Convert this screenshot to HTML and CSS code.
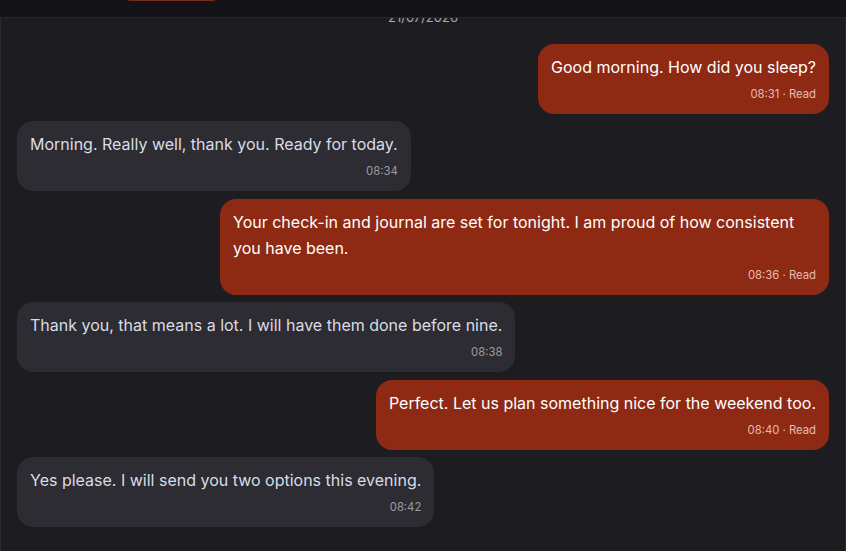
FILE: index.html
```html
<!DOCTYPE html>
<html>
<head>
<meta charset="utf-8">
<link rel="stylesheet" href="styles.css">
</head>
<body>
<div class="app">
  <header class="topbar">
    <span class="top-btn"></span>
  </header>
  <main class="chat">
    <div class="date">21/07/2026</div>
    <div class="msg out">
      <p class="text">Good morning. How did you sleep?</p>
      <div class="meta">08:31 · Read</div>
    </div>
    <div class="msg in">
      <p class="text">Morning. Really well, thank you. Ready for today.</p>
      <div class="meta">08:34</div>
    </div>
    <div class="msg out">
      <p class="text">Your check-in and journal are set for tonight. I am proud of how consistent you have been.</p>
      <div class="meta">08:36 · Read</div>
    </div>
    <div class="msg in">
      <p class="text">Thank you, that means a lot. I will have them done before nine.</p>
      <div class="meta">08:38</div>
    </div>
    <div class="msg out">
      <p class="text">Perfect. Let us plan something nice for the weekend too.</p>
      <div class="meta">08:40 · Read</div>
    </div>
    <div class="msg in">
      <p class="text">Yes please. I will send you two options this evening.</p>
      <div class="meta">08:42</div>
    </div>
  </main>
</div>
</body>
</html>
```
FILE: styles.css
```css
html, body {
  margin: 0;
  padding: 0;
  background: #141418;
  font-family: Inter, "Noto Sans", sans-serif;
  overflow: hidden;
}
.app {
  position: relative;
  width: 846px;
  height: 551px;
  overflow: hidden;
}
.topbar {
  position: absolute;
  top: 0;
  left: 0;
  right: 0;
  height: 17px;
  background: #141418;
  border-bottom: 1px solid #26262c;
  z-index: 2;
}
.top-btn {
  position: absolute;
  left: 126px;
  top: -20px;
  width: 91px;
  height: 21px;
  background: #5b1c15;
  border: 1px solid #7a2a20;
  border-radius: 0 0 4px 4px;
  box-sizing: border-box;
}
.chat {
  box-sizing: border-box;
  height: 551px;
  background: #1c1c21;
  border-left: 1px solid #2a2a30;
  border-right: 1px solid #2a2a30;
  padding: 9px 16px 0 16px;
  display: flex;
  flex-direction: column;
  gap: 7.4px;
}
.date {
  text-align: center;
  font-size: 13px;
  line-height: 16px;
  color: #a3a8b8;
  margin-bottom: 11.6px;
}
.msg {
  max-width: 75%;
  box-sizing: border-box;
  padding: 10px 13px 12px 13px;
  border-radius: 16px;
}
.msg.out {
  align-self: flex-end;
  background: #8e2914;
  color: #ffffff;
}
.msg.in {
  align-self: flex-start;
  background: #2c2c32;
  color: #d9dce6;
}
.text {
  margin: 0;
  font-size: 16px;
  line-height: 26px;
}
.meta {
  margin-top: 6px;
  text-align: right;
  font-size: 11.3px;
  line-height: 16px;
}
.msg.out .meta {
  color: #e8bcb0;
}
.msg.in .meta {
  color: #9a9ca4;
}
```
